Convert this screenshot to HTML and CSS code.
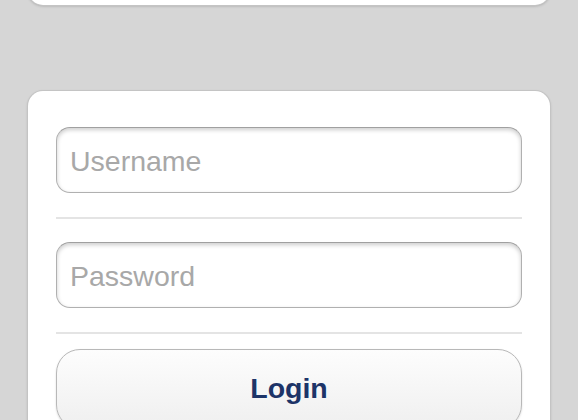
FILE: index.html
```html
<!DOCTYPE html>
<html>
<head>
<meta charset="utf-8">
<link rel="stylesheet" href="styles.css">
</head>
<body>
<div class="page">
  <div class="card card-top"></div>
  <form class="card login">
    <div class="field"><input class="input" type="text" placeholder="Username"></div>
    <div class="sep"></div>
    <div class="field"><input class="input" type="password" placeholder="Password"></div>
    <div class="sep sep-last"></div>
    <button class="btn" type="button">Login</button>
  </form>
</div>
</body>
</html>
```
FILE: styles.css
```css
html, body {
  margin: 0;
  padding: 0;
  height: 100%;
  overflow: hidden;
}
body {
  background: #d6d6d6;
  font-family: "Liberation Sans", Arial, sans-serif;
}
.page {
  display: flex;
  flex-direction: column;
  padding: 0 28px;
}
.card {
  background: #fff;
  border-radius: 15px;
  box-shadow: 0 0 0 1px #c4c4c4, 0 1px 3px rgba(0,0,0,0.25);
}
.card-top {
  height: 60px;
  margin-top: -55px;
}
.login {
  margin-top: 86px;
  padding: 36px 28px 40px;
  display: flex;
  flex-direction: column;
}
.field {
  display: flex;
}
.input {
  flex: 1;
  box-sizing: border-box;
  height: 66px;
  border: 1px solid #b0b0b0;
  border-top-color: #a0a0a0;
  border-radius: 14px;
  background: #fff;
  box-shadow: inset 0 2px 4px rgba(0,0,0,0.2);
  padding: 2px 13px 0;
  font-family: "Liberation Sans", Arial, sans-serif;
  font-size: 28.5px;
  color: #333;
  outline: none;
}
.input::placeholder {
  color: #a8a8a8;
}
.sep {
  height: 2px;
  background: #e4e4e4;
  margin: 24px 0 23px;
}
.sep-last {
  margin-bottom: 15px;
}
.btn {
  box-sizing: border-box;
  height: 80px;
  border: 1px solid #b8b8b8;
  border-radius: 24px;
  background: linear-gradient(#fdfdfd, #efefef);
  box-shadow: 0 1px 2px rgba(0,0,0,0.15);
  font-family: "Liberation Sans", Arial, sans-serif;
  font-weight: bold;
  font-size: 28.5px;
  color: #1d3468;
  padding: 0 0 1px;
}
```
